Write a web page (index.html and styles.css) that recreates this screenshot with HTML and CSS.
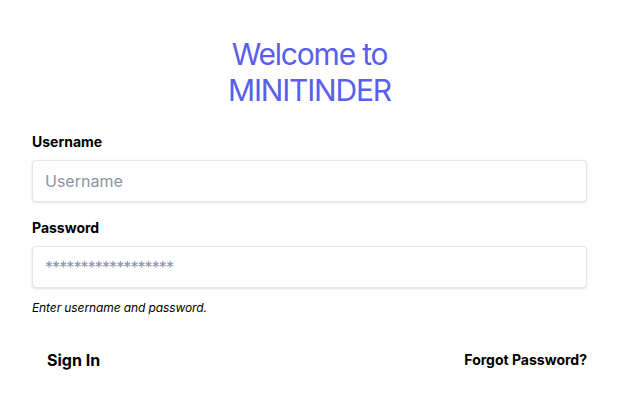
FILE: index.html
```html
<!DOCTYPE html>
<html lang="en">
<head>
<meta charset="utf-8">
<title>MINITINDER</title>
<link rel="stylesheet" href="styles.css">
</head>
<body>
<form class="card">
  <h1 class="title">Welcome to<br>MINITINDER</h1>
  <div class="field">
    <label class="label" for="username">Username</label>
    <input class="input" id="username" type="text" placeholder="Username">
  </div>
  <div class="field field-last">
    <label class="label" for="password">Password</label>
    <input class="input input-password" id="password" type="password" placeholder="******************">
    <p class="help">Enter username and password.</p>
  </div>
  <div class="actions">
    <button class="btn" type="button">Sign In</button>
    <a class="link" href="#">Forgot Password?</a>
  </div>
</form>
</body>
</html>
```
FILE: styles.css
```css
* { box-sizing: border-box; }
html, body { margin: 0; padding: 0; background: #fff; }
body { font-family: Inter, "Noto Sans", "Liberation Sans", sans-serif; color: #000; }
.card { padding: 36px 32px 24px; }
.title {
  margin: 0 0 24px;
  text-align: center;
  font-size: 30px;
  line-height: 36px;
  font-weight: 400;
  letter-spacing: -1.2px;
  color: #5a5eec;
}
.field { margin-bottom: 16px; }
.field-last { margin-bottom: 24px; }
.label {
  display: block;
  font-size: 14px;
  line-height: 20px;
  font-weight: 700;
  margin-bottom: 8px;
}
.input {
  display: block;
  width: 100%;
  height: 42px;
  padding: 8px 12px;
  font-family: inherit;
  font-size: 16px;
  line-height: 24px;
  color: #374151;
  border: 1px solid #e5e7eb;
  border-radius: 4px;
  box-shadow: 0 1px 3px 0 rgba(0,0,0,0.1), 0 1px 2px -1px rgba(0,0,0,0.1);
  outline: none;
}
.input::placeholder { color: #8d94a0; }
.input-password::placeholder { letter-spacing: -0.9px; color: #8a93a3; }
.help {
  margin: 12px 0 0;
  font-size: 12px;
  line-height: 16px;
  font-style: italic;
  letter-spacing: -0.1px;
}
.actions {
  display: flex;
  justify-content: space-between;
  align-items: center;
}
.btn {
  background: none;
  border: 0;
  padding: 8px 15px;
  font-family: inherit;
  font-size: 16px;
  line-height: 24px;
  font-weight: 700;
  color: #000;
}
.link {
  font-size: 14px;
  line-height: 20px;
  font-weight: 700;
  color: #000;
  text-decoration: none;
}
```
